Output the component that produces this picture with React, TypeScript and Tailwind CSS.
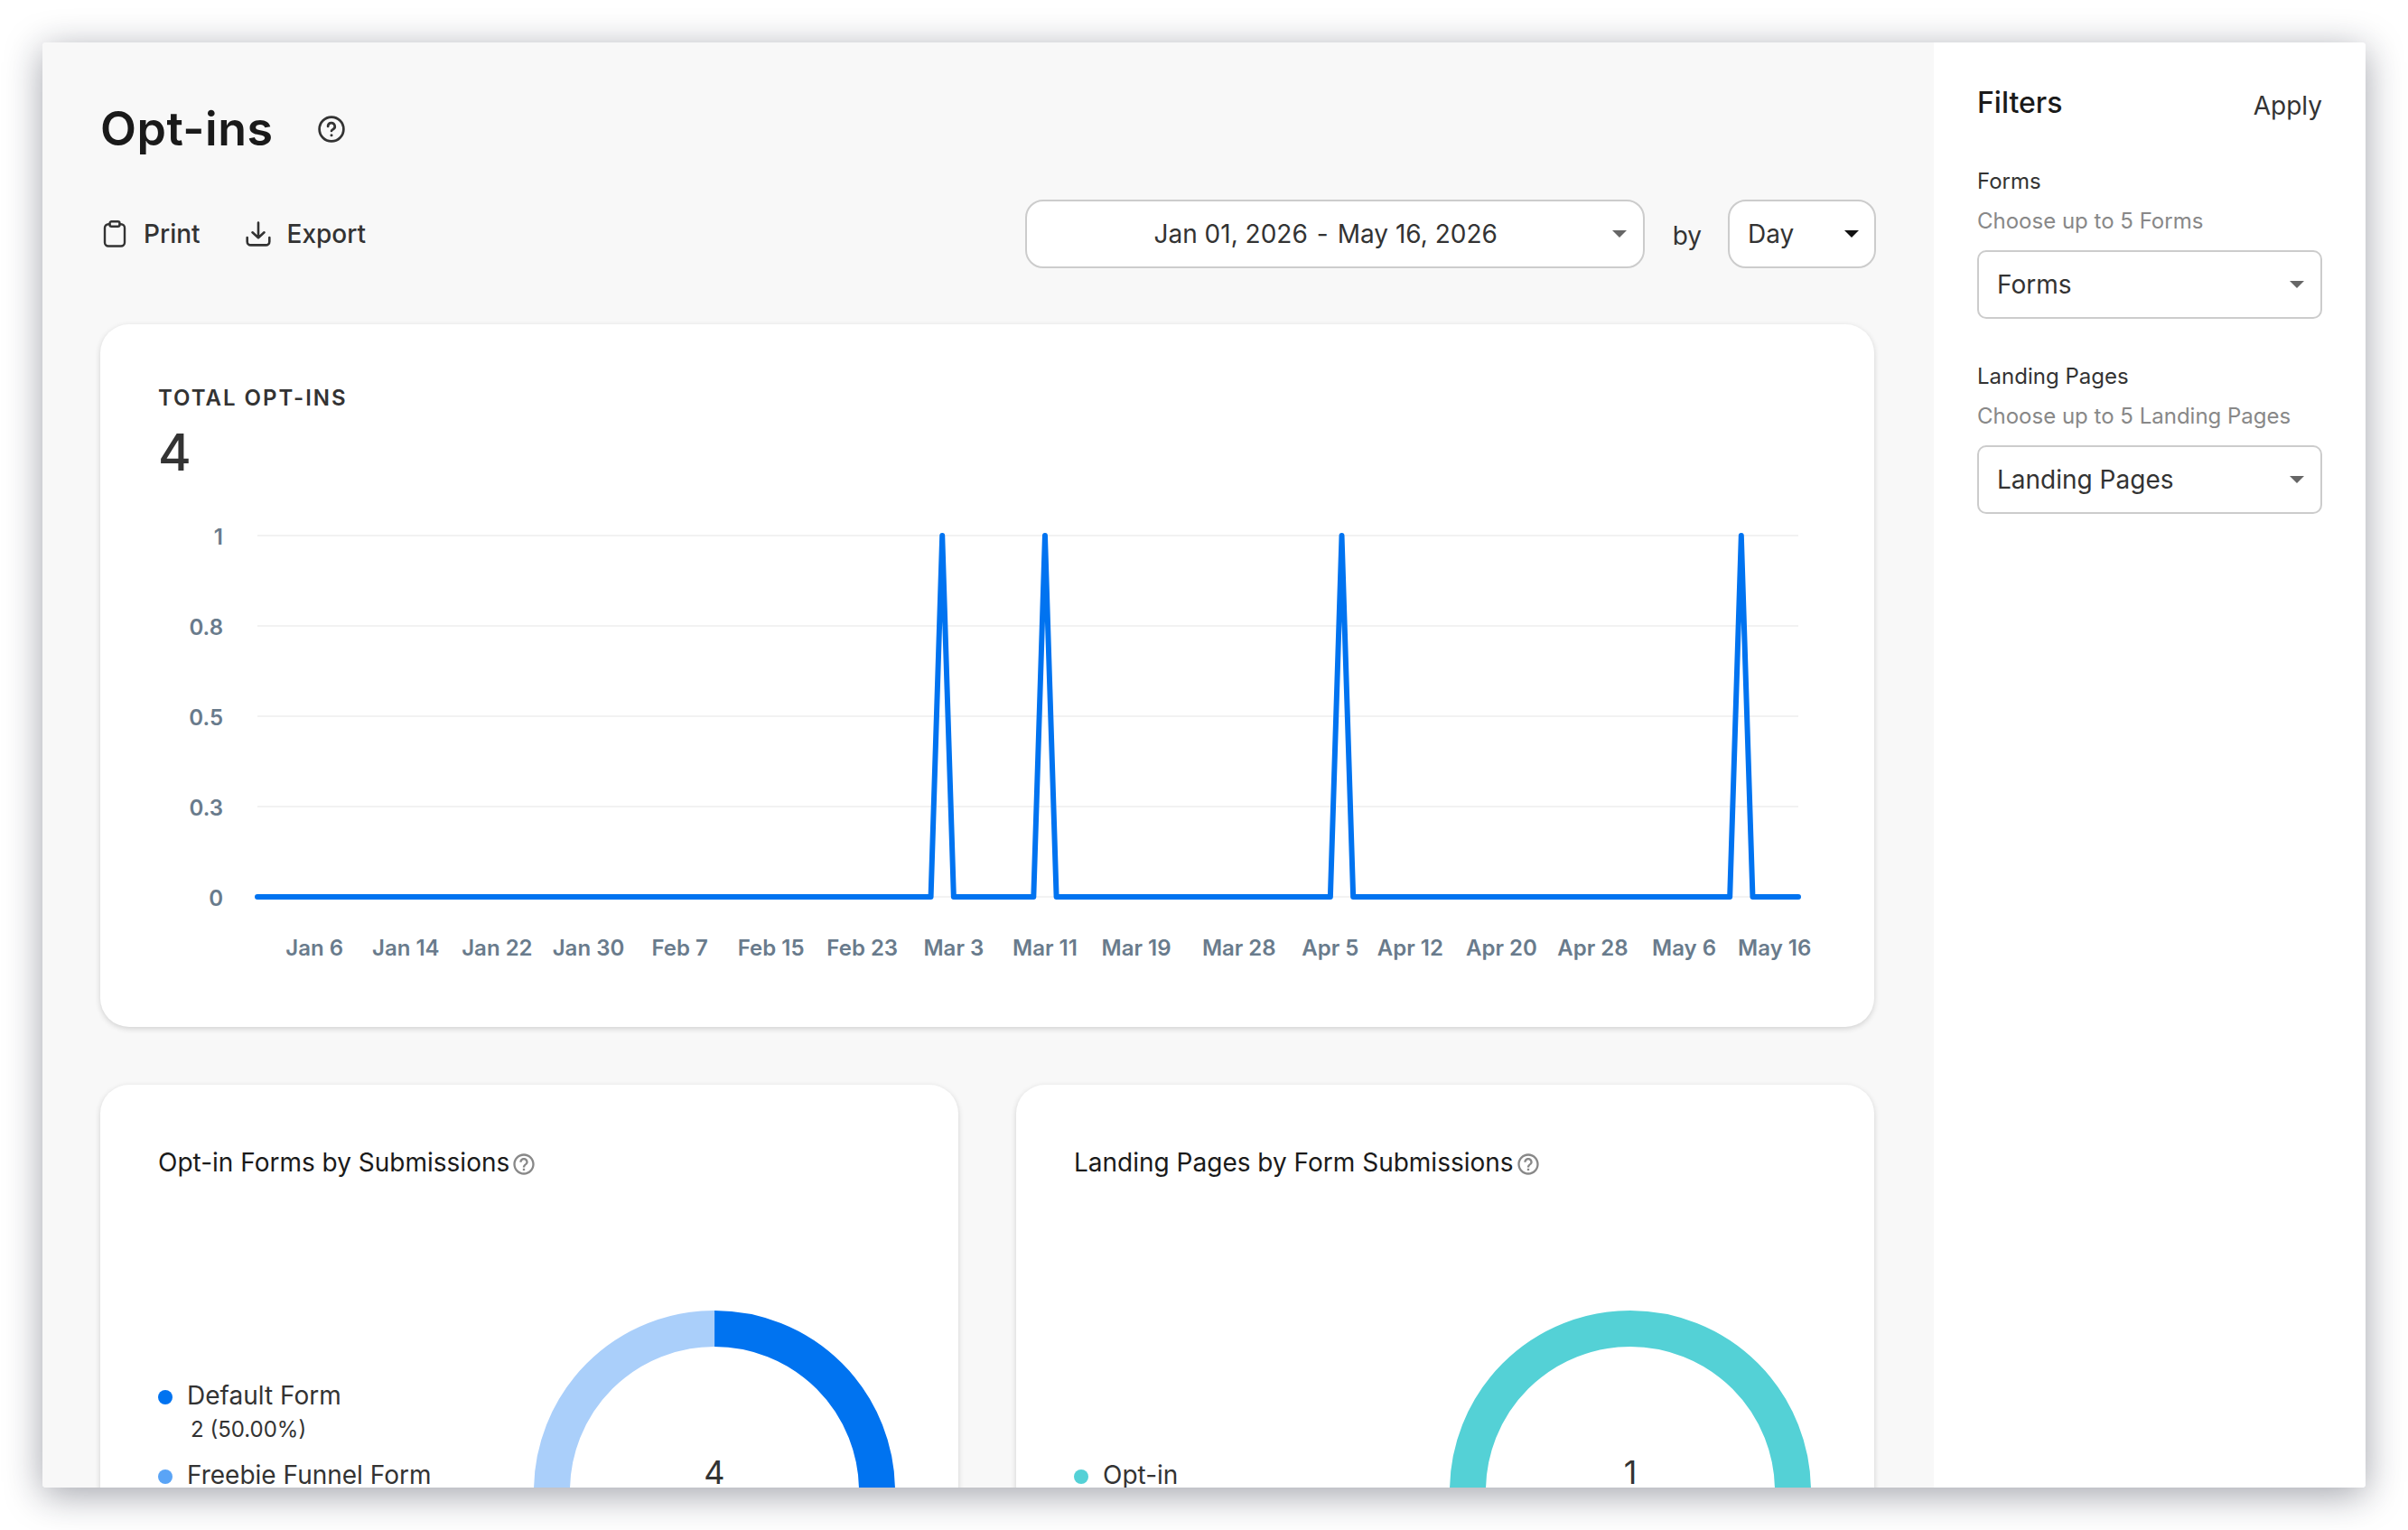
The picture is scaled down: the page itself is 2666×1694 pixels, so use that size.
import { MdHelpOutline } from 'react-icons/md';

const DAYS = 135;
const CHART = { left: 285, right: 1991, top: 593, bottom: 993 };

const spikes = [60, 69, 95, 130];

const yLabels = ['1', '0.8', '0.5', '0.3', '0'];

const xLabels = [
  { day: 5, label: 'Jan 6' },
  { day: 13, label: 'Jan 14' },
  { day: 21, label: 'Jan 22' },
  { day: 29, label: 'Jan 30' },
  { day: 37, label: 'Feb 7' },
  { day: 45, label: 'Feb 15' },
  { day: 53, label: 'Feb 23' },
  { day: 61, label: 'Mar 3' },
  { day: 69, label: 'Mar 11' },
  { day: 77, label: 'Mar 19' },
  { day: 86, label: 'Mar 28' },
  { day: 94, label: 'Apr 5' },
  { day: 101, label: 'Apr 12' },
  { day: 109, label: 'Apr 20' },
  { day: 117, label: 'Apr 28' },
  { day: 125, label: 'May 6' },
  { day: 132.92, label: 'May 16' },
];

function dayX(day: number) {
  return CHART.left + (day / DAYS) * (CHART.right - CHART.left);
}

function OptInsChart() {
  const points = Array.from({ length: DAYS + 1 }, (_, i) =>
    `${dayX(i).toFixed(2)},${spikes.includes(i) ? CHART.top : CHART.bottom}`
  ).join(' ');

  return (
    <svg viewBox="175 560 1836 520" className="block w-[1836px] h-[520px] overflow-visible">
      {yLabels.map((label, i) => (
        <g key={label}>
          <line x1={CHART.left} x2={CHART.right} y1={593 + i * 100} y2={593 + i * 100} stroke="#f2f2f2" strokeWidth="2" />
          <text x="247" y={602.5 + i * 100} textAnchor="end" className="text-[24px] font-semibold fill-[#697b8c]">{label}</text>
        </g>
      ))}
      <polyline points={points} fill="none" stroke="#0073f0" strokeWidth="6" strokeLinecap="round" strokeLinejoin="round" />
      {xLabels.map(({ day, label }) => (
        <text key={label} x={dayX(day)} y="1057.5" textAnchor="middle" className="text-[24px] font-semibold fill-[#697b8c]">{label}</text>
      ))}
    </svg>
  );
}

function HelpIcon() {
  return (
    <svg viewBox="0 0 32 32" className="w-8 h-8" fill="none" stroke="#333" strokeWidth="2.7" strokeLinecap="round" strokeLinejoin="round">
      <circle cx="16" cy="16" r="13.4" />
      <path d="M12.1 12.9a3.8 3.8 0 1 1 5.6 3.3c-1.1.6-1.7 1-1.7 1.700" />
      <circle cx="16" cy="22.700" r="1.500" fill="#333" stroke="none" />
    </svg>
  );
}

function Caret({ className }: { className: string }) {
  return (
    <svg viewBox="0 0 16 8" className={`w-4 h-2 ${className}`}>
      <path d="M0 0h16L8 8z" fill="currentColor" />
    </svg>
  );
}

function Donut({ total, segments }: { total: number; segments: { color: string; share: number }[] }) {
  const circumference = 2 * Math.PI * 180;
  let offset = 0;
  return (
    <svg viewBox="0 0 400 400" className="w-[400px] h-[400px] shrink-0">
      {segments.map(s => {
        const start = offset;
        offset += s.share;
        return (
          <circle
            key={s.color}
            cx="200" cy="200" r="180" fill="none" stroke={s.color} strokeWidth="40"
            strokeDasharray={`${s.share * circumference} ${circumference}`}
            transform={`rotate(${start * 360 - 90} 200 200)`}
          />
        );
      })}
      <text x="200" y="192" textAnchor="middle" className="text-[36px] fill-[#333333]">{total}</text>
    </svg>
  );
}

function LegendItem({ label, value, dot }: { label: string; value?: string; dot: string }) {
  return (
    <li className="h-[88px]">
      <div className="flex items-center h-10">
        <span className={`w-4 h-4 rounded-full mr-4 mt-1 ${dot}`} />
        <span className="text-[28px] leading-10">{label}</span>
      </div>
      {value && <p className="text-[24px] leading-8 mt-0.5 pl-9">{value}</p>}
    </li>
  );
}

function BreakdownCard({ title, legend, children }: { title: string; legend: React.ReactNode; children: React.ReactNode }) {
  return (
    <section className="w-[950px] h-[860px] shrink-0 bg-white rounded-[32px] px-16 pt-16 shadow-[0_2px_6px_rgba(0,0,0,0.16)]">
      <div className="flex items-center h-[44px]">
        <h2 className="text-[28px] text-[#1a1a1a]">{title}</h2>
        <MdHelpOutline className="w-7 h-7 ml-0.5 mt-[3px] text-[#888888]" />
      </div>
      <div className="flex items-center justify-between mt-[142px] h-[400px] pr-[6px]">
        {legend}
        {children}
      </div>
    </section>
  );
}

function FilterSelect({ label, hint }: { label: string; hint: string }) {
  return (
    <div>
      <p className="text-[24px] leading-9 text-[#333333]">{label}</p>
      <p className="text-[24px] leading-9 mt-2 text-[#888888]">{hint}</p>
      <button className="flex items-center justify-between w-full h-[76px] mt-[14px] pl-5 pr-[18px] rounded-[10px] border-2 border-[#cccccc] bg-white text-[28px]">
        {label}
        <Caret className="text-[#666666]" />
      </button>
    </div>
  );
}

export default function App() {
  return (
    <div className="w-[2666px] h-[1694px] bg-white p-[47px] overflow-hidden font-['Inter',sans-serif] text-[#333333]">
      <div className="w-[2572px] h-[1600px] rounded-[4px] shadow-[0_8px_42px_rgba(20,25,45,0.4)]">
        <div className="flex w-full h-full rounded-[4px] overflow-hidden bg-[#f8f8f8]">
          <main className="w-[2094px] shrink-0 pl-16 pt-16">
            {/* Header */}
            <div className="flex items-center h-16">
              <h1 className="text-[52px] font-semibold leading-[64px] tracking-[0.5px] text-[#1a1a1a]">Opt-ins</h1>
              <div className="ml-12"><HelpIcon /></div>
            </div>

            {/* Toolbar */}
            <div className="flex items-center h-[76px] w-[1966px] mt-[46px]">
              <button className="flex items-center gap-4 text-[28px] font-medium">
                <svg viewBox="0 0 32 32" className="w-8 h-8" fill="none" stroke="currentColor" strokeWidth="2.4" strokeLinecap="round" strokeLinejoin="round">
                  <path d="M10.500 5.200H9a4 4 0 0 0-4 4V25.500a4 4 0 0 0 4 4h14a4 4 0 0 0 4-4V9.200a4 4 0 0 0-4-4h-1.500" />
                  <rect x="10.500" y="2.200" width="11" height="5.600" rx="2" />
                </svg>
                Print
              </button>
              <button className="flex items-center gap-4 ml-12 text-[28px] font-medium">
                <svg viewBox="0 0 32 32" className="w-8 h-8" fill="none" stroke="currentColor" strokeWidth="2.6" strokeLinecap="round" strokeLinejoin="round">
                  <path d="M16 3.600v16.400M9.500 14.300l6.500 5.900 6.500-5.900M3.700 20v4.400a4 4 0 0 0 4 4h16.600a4 4 0 0 0 4-4V20" />
                </svg>
                Export
              </button>
              <button className="relative flex items-center justify-center w-[686px] h-[76px] ml-auto pr-5 rounded-[20px] border-2 border-[#cccccc] bg-white text-[28px]">
                Jan 01, 2026<span className="mx-2.5">-</span>May 16, 2026
                <Caret className="absolute right-[18px] text-[#666666]" />
              </button>
              <span className="ml-[31px] mr-[29px] pt-1 text-[28px]">by</span>
              <button className="flex items-center justify-between w-[164px] h-[76px] pl-5 pr-[17px] rounded-[20px] border-2 border-[#cccccc] bg-white text-[28px]">
                Day
                <Caret className="text-[#111111]" />
              </button>
            </div>

            {/* Total opt-ins */}
            <section className="w-[1964px] h-[778px] mt-[62px] px-16 pt-16 bg-white rounded-[32px] shadow-[0_2px_6px_rgba(0,0,0,0.16)]">
              <h2 className="text-[24px] leading-9 font-semibold tracking-[2px]">TOTAL OPT-INS</h2>
              <p className="text-[56px] leading-[64px] mt-2.5 font-medium">4</p>
              <div className="mt-[27px]"><OptInsChart /></div>
            </section>

            {/* Breakdown cards */}
            <div className="flex gap-16 mt-16">
              <BreakdownCard
                title="Opt-in Forms by Submissions"
                legend={
                  <ul className="h-[264px] mt-3">
                    <LegendItem label="Default Form" value="2 (50.00%)" dot="bg-[#0073f0]" />
                    <LegendItem label="Freebie Funnel Form" dot="bg-[#5aa4f6]" />
                  </ul>
                }
              >
                <Donut
                  total={4}
                  segments={[
                    { color: '#0073f0', share: 0.5 },
                    { color: '#5aa4f6', share: 0.25 },
                    { color: '#aacffa', share: 0.25 },
                  ]}
                />
              </BreakdownCard>
              <BreakdownCard
                title="Landing Pages by Form Submissions"
                legend={
                  <ul className="mt-3">
                    <LegendItem label="Opt-in" dot="bg-[#54d1d6]" />
                  </ul>
                }
              >
                <Donut total={1} segments={[{ color: '#54d1d6', share: 1 }]} />
              </BreakdownCard>
            </div>
          </main>

          {/* Filters */}
          <aside className="w-[478px] shrink-0 h-full bg-white px-12 pt-12">
            <div className="flex items-center justify-between h-10">
              <h2 className="text-[32px] font-medium leading-10 -mt-0.5 text-[#1a1a1a]">Filters</h2>
              <button className="text-[28px] pt-1">Apply</button>
            </div>
            <div className="mt-[48px] flex flex-col gap-[46px]">
              <FilterSelect label="Forms" hint="Choose up to 5 Forms" />
              <FilterSelect label="Landing Pages" hint="Choose up to 5 Landing Pages" />
            </div>
          </aside>
        </div>
      </div>
    </div>
  );
}
